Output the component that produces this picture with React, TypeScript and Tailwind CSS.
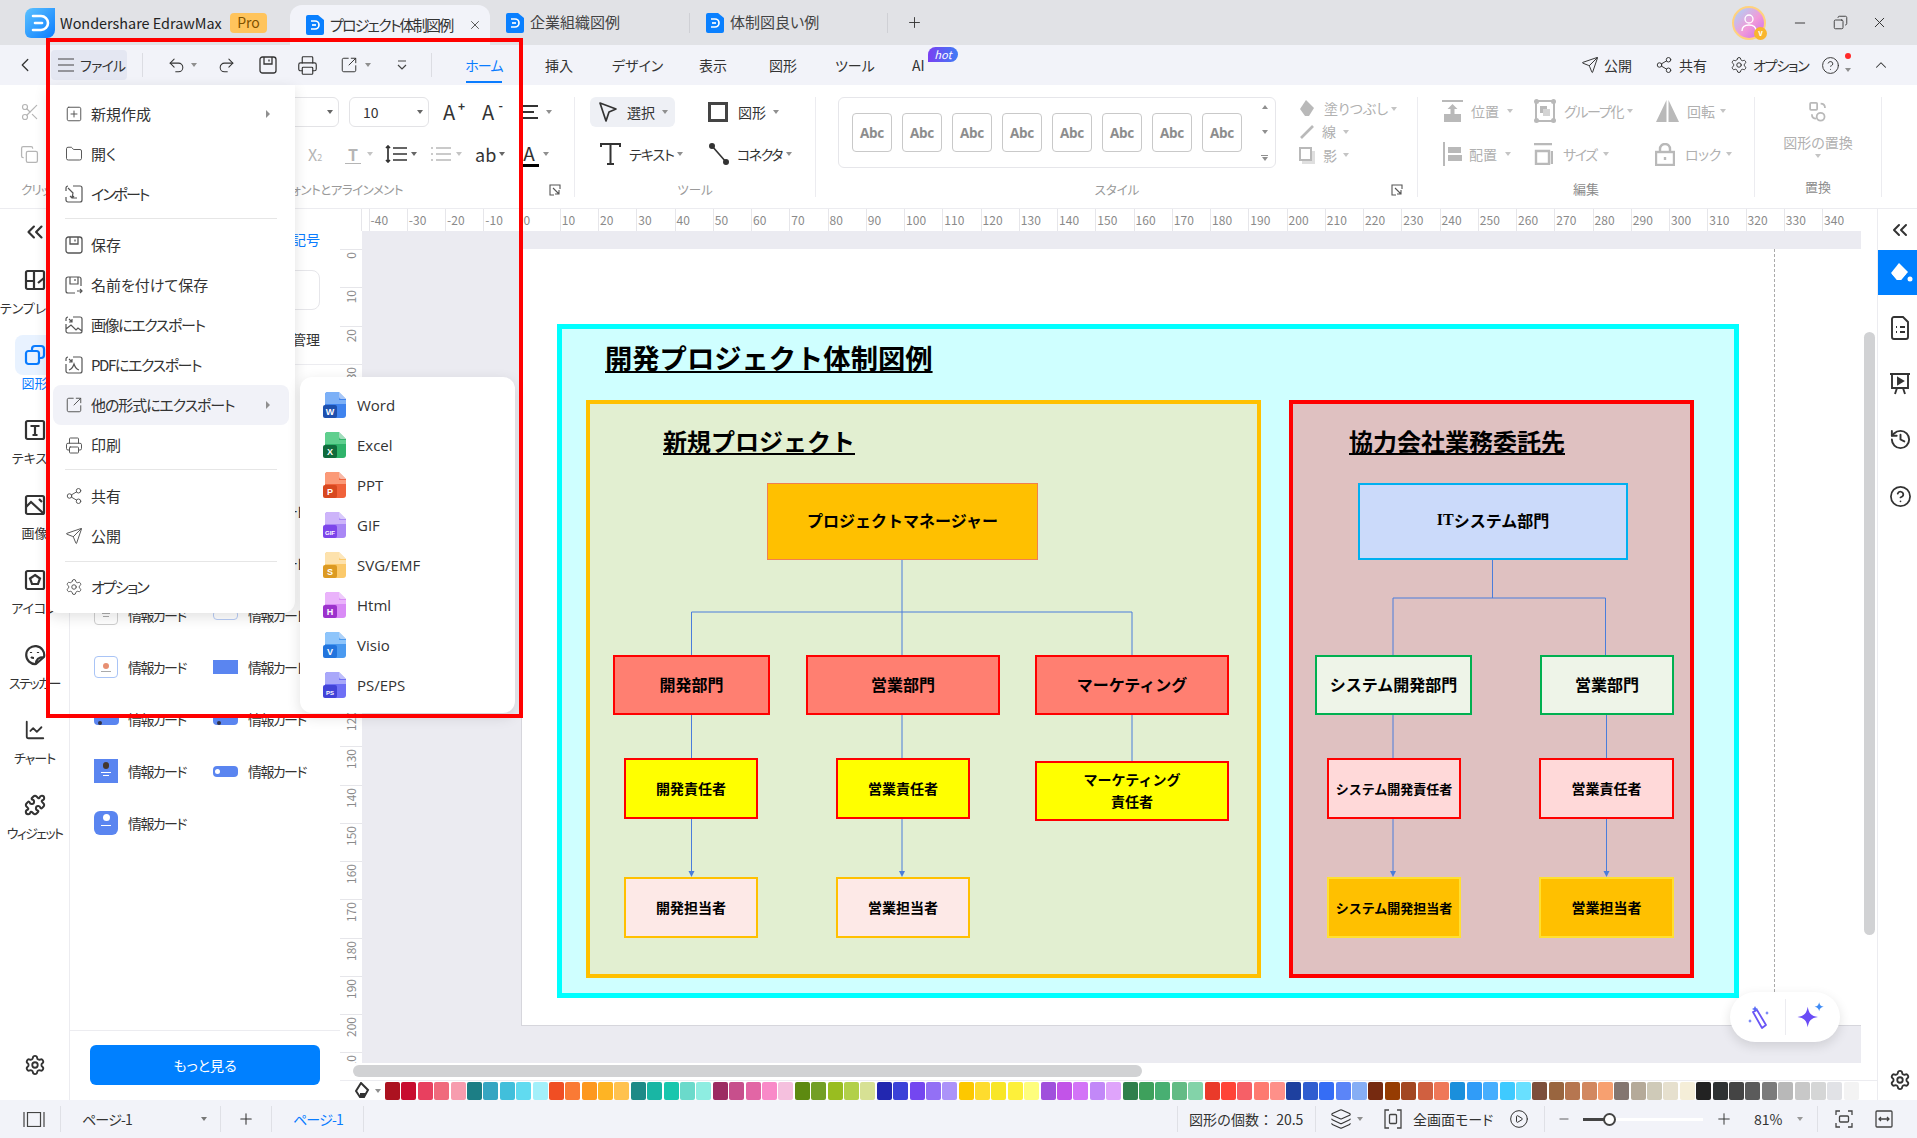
import {
  ChartLine, ChevronLeft, ChevronsLeft, ChevronUp, CircleHelp, CirclePlay, Copy, Folder, History, Layers, Minus, Plus,
  Printer, Puzzle, Redo2, Scissors, Send, Settings, Share2, SquareArrowOutUpRight, SquarePlus, Undo2, X,
} from "lucide-react";
import { ReactNode } from "react";

const palette = [
  "#ac1220", "#c80c2f", "#e8405f", "#f06a7c", "#f79cae",
  "#1c7e85", "#36a6c2", "#41bfdb", "#61dbf0", "#a3f0fa",
  "#f04e23", "#fa7a35", "#fd981e", "#feb424", "#ffc24f",
  "#1d8a87", "#19b6a4", "#18c6ad", "#6bdacb", "#8eede1",
  "#9c2c62", "#c74f8c", "#e266a5", "#f98ac8", "#f5c0de",
  "#5d8a10", "#739f26", "#99bd20", "#b2d04a", "#d7e194",
  "#2227b0", "#3b42d8", "#7447f0", "#9370f5", "#ac93f9",
  "#fdc800", "#fedc2e", "#f8e627", "#fdf03a", "#fefd7c",
  "#a050dc", "#c254e8", "#d374f7", "#c288f8", "#dfa4fb",
  "#2f7f4c", "#3ea05c", "#48af72", "#63bb85", "#83d3a9",
  "#ea3a2a", "#ff4438", "#f66067", "#fe7a70", "#fe9089",
  "#1e409f", "#2f5dd0", "#356df5", "#5b85f8", "#86aef5",
  "#762a10", "#963c02", "#a34722", "#d06040", "#ef7858",
  "#1a8fdc", "#309cf8", "#46aefe", "#3fcaff", "#69e0ff",
  "#7d4f3c", "#99653f", "#b67650", "#d28860", "#f7a070",
  "#847670", "#b5aa99", "#cfcab8", "#e6e0ce", "#f5eed8",
  "#222222", "#2e3233", "#444444", "#5b5b5b", "#7c7c7c",
  "#b8b8b8", "#c8c8c8", "#d5d6d6", "#e1e2e6", "#f3f3f3", "#ffffff",
];

function Caret({ className = "" }: { className?: string }) {
  return <span className={`inline-block shrink-0 border-x-[3.5px] border-t-[4px] border-x-transparent border-t-[#8f8f8f] ${className}`} />;
}

function SideCaret() {
  return <span className="inline-block border-y-[4px] border-l-[4px] border-y-transparent border-l-[#8f8f8f]" />;
}

function Logo() {
  return (
    <svg width="30" height="30" viewBox="0 0 30 30" className="shrink-0">
      <defs>
        <linearGradient id="lg" x1="0" y1="0" x2="1" y2="1">
          <stop offset="0" stopColor="#5cc2ff" />
          <stop offset="1" stopColor="#0a7cff" />
        </linearGradient>
      </defs>
      <path d="M8 0h22v22a8 8 0 0 1-8 8H6a6 6 0 0 1-6-6V8a8 8 0 0 1 8-8z" fill="url(#lg)" />
      <path d="M8 8h8a7 7 0 0 1 0 14H8" fill="none" stroke="#fff" strokeWidth="2.6" strokeLinecap="round" />
      <path d="M10 15h7" stroke="#fff" strokeWidth="2.6" strokeLinecap="round" />
    </svg>
  );
}

function DocMark() {
  return (
    <svg width="18" height="20" viewBox="0 0 18 20" className="shrink-0">
      <path d="M2 0h10l6 5v13a2 2 0 0 1-2 2H2a2 2 0 0 1-2-2V2a2 2 0 0 1 2-2z" fill="#0a80ff" />
      <path d="M5 6h4a4 4 0 0 1 0 8H5" fill="none" stroke="#fff" strokeWidth="1.7" />
      <path d="M6 10h4" stroke="#fff" strokeWidth="1.7" />
    </svg>
  );
}

function SaveIcon({ size = 18, color = "#333" }: { size?: number; color?: string }) {
  return (
    <svg width={size} height={size} viewBox="0 0 18 18" fill="none" stroke={color} strokeWidth="1.3" className="shrink-0">
      <rect x="1" y="1" width="16" height="16" rx="2.5" />
      <path d="M5 1v7h8V1M10 3.5v2" />
    </svg>
  );
}

function MenuGlyph({ kind }: { kind: string }) {
  return (
    <svg width="18" height="18" viewBox="0 0 18 18" fill="none" stroke="#555" strokeWidth="1.2" className="shrink-0">
      {kind === "import" && <path d="M8 1h7a2 2 0 0 1 2 2v12a2 2 0 0 1-2 2H3a2 2 0 0 1-2-2v-3M1 6V3a2 2 0 0 1 2-2M3 3l5 5-1 5h5M5 11l2 2 2-2" />}
      {kind === "saveas" && <path d="M16 10V3a2 2 0 0 0-2-2H3a2 2 0 0 0-2 2v12a2 2 0 0 0 2 2h7M5 1v7h8V1M10 3v2M12 15h5M15 13l2 2-2 2" />}
      {kind === "image" && <path d="M8 1h7a2 2 0 0 1 2 2v12a2 2 0 0 1-2 2H3a2 2 0 0 1-2-2V8M1 5V3a2 2 0 0 1 2-2M1 13l5-4 5 5 2-2 4 3M4 3l3 3M7 3v3H4" />}
      {kind === "pdf" && <path d="M8 1h7a2 2 0 0 1 2 2v12a2 2 0 0 1-2 2H3a2 2 0 0 1-2-2V8M1 5V3a2 2 0 0 1 2-2M4 3l3 3M7 3v3H4M4 14c3-1 4-3 5-6 1 3 2 5 5 6" />}
    </svg>
  );
}

function MenuItem({ icon, label, arrow, active, track = "" }: { icon: ReactNode; label: string; arrow?: boolean; active?: boolean; track?: string }) {
  return (
    <div className={`mx-[6px] flex h-[40px] items-center rounded-lg pl-[12px] pr-[19px] ${active ? "bg-[#f1f2f8]" : ""}`}>
      <span className="flex w-[18px] justify-center text-[#555]">{icon}</span>
      <span className={`ml-[8px] flex-1 whitespace-nowrap text-[15px] text-[#333] ${track}`}>{label}</span>
      {arrow && <SideCaret />}
    </div>
  );
}

function FileBadge({ light, mid, dark, letter }: { light: string; mid: string; dark: string; letter: string }) {
  return (
    <svg width="23" height="27" viewBox="0 0 23 27" className="shrink-0">
      <path d="M5 0h11l7 7v16a3 3 0 0 1-3 3H5a3 3 0 0 1-3-3V3a3 3 0 0 1 3-3z" fill={mid} />
      <path d="M5 0h11v8h7v4H2V3a3 3 0 0 1 3-3z" fill={light} />
      <path d="M16 0l7 7h-5a2 2 0 0 1-2-2z" fill="#fff" fillOpacity="0.55" />
      <rect x="0" y="13" width="14" height="13" rx="2" fill={dark} />
      <text x="7" y="23" textAnchor="middle" fontSize={letter.length > 1 ? 6 : 9} fontWeight="700" fill="#fff" fontFamily="'Liberation Sans', sans-serif">{letter}</text>
    </svg>
  );
}

function FileMenu() {
  return (
    <div className="absolute left-[47px] top-[85px] w-[248px] rounded-b-xl bg-white pb-[6px] pt-[9px] shadow-[0_4px_14px_rgba(0,0,0,0.12)]">
      <MenuItem icon={<SquarePlus size={18} strokeWidth={1.3} />} label="新規作成" arrow />
      <MenuItem icon={<Folder size={18} strokeWidth={1.3} />} label="開く" />
      <MenuItem icon={<MenuGlyph kind="import" />} label="インポート" track="tracking-[-2px]" />
      <div className="mx-[18px] mb-[6px] mt-[4px] h-px bg-[#e6e6e6]" />
      <MenuItem icon={<SaveIcon color="#555" />} label="保存" />
      <MenuItem icon={<MenuGlyph kind="saveas" />} label="名前を付けて保存" />
      <MenuItem icon={<MenuGlyph kind="image" />} label="画像にエクスポート" track="tracking-[-1.4px]" />
      <MenuItem icon={<MenuGlyph kind="pdf" />} label="PDFにエクスポート" track="tracking-[-1.4px]" />
      <MenuItem icon={<SquareArrowOutUpRight size={18} strokeWidth={1.3} />} label="他の形式にエクスポート" arrow active track="tracking-[-1.1px]" />
      <MenuItem icon={<Printer size={19} strokeWidth={1.3} />} label="印刷" />
      <div className="mx-[18px] mb-[6px] mt-[4px] h-px bg-[#e6e6e6]" />
      <MenuItem icon={<Share2 size={18} strokeWidth={1.3} />} label="共有" />
      <MenuItem icon={<Send size={18} strokeWidth={1.3} />} label="公開" />
      <div className="mx-[18px] mb-[5px] mt-[5px] h-px bg-[#e6e6e6]" />
      <MenuItem icon={<Settings size={18} strokeWidth={1.3} />} label="オプション" track="tracking-[-1.8px]" />
    </div>
  );
}

function ExportMenu() {
  const rows: [string, string, string, string, string][] = [
    ["Word", "#7cb0f7", "#3f83ee", "#1d50ae", "W"],
    ["Excel", "#5fcf8e", "#2fb36a", "#106b3c", "X"],
    ["PPT", "#fb9a78", "#f0623a", "#d8481f", "P"],
    ["GIF", "#cdb4fa", "#a987f5", "#7c45ea", "GIF"],
    ["SVG/EMF", "#fde2ad", "#fbc96a", "#dc9a22", "S"],
    ["Html", "#eab3fb", "#d98bf6", "#9c32cc", "H"],
    ["Visio", "#8ec5fb", "#4a9af0", "#2274dd", "V"],
    ["PS/EPS", "#a9a8fa", "#6f70f5", "#4243d8", "PS"],
  ];
  return (
    <div className="absolute left-[300px] top-[377px] w-[215px] rounded-xl bg-white py-[8px] shadow-[0_4px_14px_rgba(0,0,0,0.12)]">
      {rows.map(([name, light, mid, dark, letter]) => (
        <div key={name} className="flex h-[40px] items-center pl-[23px]">
          <FileBadge light={light} mid={mid} dark={dark} letter={letter} />
          <span className="ml-[11px] font-['Open_Sans','Noto_Sans',sans-serif] text-[15px] text-[#333]">{name}</span>
        </div>
      ))}
    </div>
  );
}

function TitleBar() {
  return (
    <div className="flex h-[45px] shrink-0 items-center bg-[#e1e2e6] text-[15px] text-[#444]">
      <div className="ml-[25px]"><Logo /></div>
      <span className="ml-[5px] w-[160px] whitespace-nowrap text-[14.4px] text-[#222]">Wondershare EdrawMax</span>
      <span className="ml-[10px] flex h-[20px] w-[37px] items-center justify-center rounded bg-[#ffc45c] text-[14px] text-[#7f5200]">Pro</span>
      <div className="ml-[23px] flex h-[40px] w-[200px] items-center self-end rounded-t-xl bg-[#f2f3f9] pl-[16px]">
        <DocMark />
        <span className="ml-[6px] w-[122px] whitespace-nowrap tracking-[-1.8px] text-[#333]">プロジェクト体制図例</span>
        <X size={14} strokeWidth={1.5} className="ml-[16px] text-[#444]" />
      </div>
      <div className="ml-[16px]"><DocMark /></div>
      <span className="ml-[6px] w-[90px] whitespace-nowrap">企業組織図例</span>
      <span className="ml-[69px] h-[20px] w-px bg-[#cfd0d5]" />
      <div className="ml-[16px]"><DocMark /></div>
      <span className="ml-[6px] w-[90px] whitespace-nowrap">体制図良い例</span>
      <span className="ml-[67px] h-[20px] w-px bg-[#cfd0d5]" />
      <Plus size={17} strokeWidth={1.3} className="ml-[18px] text-[#333]" />
      <div className="relative ml-auto h-[34px] w-[34px] rounded-full border-2 border-[#ffd27d] bg-[linear-gradient(135deg,#a8d8f8,#f19ad8_55%,#c86cf0)]">
        <svg width="30" height="30" viewBox="0 0 30 30" fill="none" stroke="#fff" strokeWidth="1.3">
          <circle cx="15" cy="11" r="4" />
          <path d="M8 23c0-4 3-6 7-6s7 2 7 6" />
        </svg>
        <span className="absolute -bottom-[2px] -right-[3px] flex h-[13px] w-[13px] items-center justify-center rounded-full bg-[#f9b52e] text-[8px] font-bold leading-none text-white">v</span>
      </div>
      <Minus size={16} strokeWidth={1.4} className="ml-[26px] text-[#333]" />
      <Copy size={15} strokeWidth={1.4} className="ml-[25px] scale-x-[-1] text-[#333]" />
      <X size={17} strokeWidth={1.4} className="ml-[23px] text-[#333]" />
      <span className="w-[29px]" />
    </div>
  );
}

function MenuBar() {
  return (
    <div className="flex h-[40px] shrink-0 items-center bg-[#f2f3f9] text-[14px] text-[#333]">
      <ChevronLeft size={22} strokeWidth={1.4} className="ml-[14px] w-[22px] text-[#333]" />
      <div className="ml-[15px] flex h-[30px] w-[76px] items-center rounded bg-[#e4e7f2] pl-[7px]">
        <svg width="16" height="14" viewBox="0 0 16 14" stroke="#444" strokeWidth="1.2"><path d="M0 1h16M0 7h16M0 13h16" /></svg>
        <span className="ml-[6px] whitespace-nowrap tracking-[-0.8px]">ファイル</span>
      </div>
      <span className="ml-[15px] h-[24px] w-px bg-[#dcdde3]" />
      <Undo2 size={19} strokeWidth={1.3} className="ml-[24px]" />
      <Caret className="ml-[5px]" />
      <Redo2 size={19} strokeWidth={1.3} className="ml-[20px]" />
      <div className="ml-[23px]"><SaveIcon /></div>
      <Printer size={21} strokeWidth={1.3} className="ml-[20px]" />
      <SquareArrowOutUpRight size={18} strokeWidth={1.3} className="ml-[22px]" />
      <Caret className="ml-[7px]" />
      <svg width="12" height="12" viewBox="0 0 12 12" fill="none" stroke="#444" strokeWidth="1.2" className="ml-[25px]"><path d="M2 2h8M2 6l4 4 4-4" /></svg>
      <span className="ml-[23px] h-[24px] w-px bg-[#dcdde3]" />
      <span className="relative ml-[34px] flex h-[40px] w-[36px] items-center justify-center whitespace-nowrap tracking-[-0.8px] text-[#0a7cff]">
        ホーム
        <span className="absolute bottom-[2px] left-0 h-[2px] w-full bg-[#0a7cff]" />
      </span>
      <span className="ml-[43px] w-[28px] whitespace-nowrap">挿入</span>
      <span className="ml-[39px] w-[44px] whitespace-nowrap">デザイン</span>
      <span className="ml-[43px] w-[28px] whitespace-nowrap">表示</span>
      <span className="ml-[42px] w-[28px] whitespace-nowrap">図形</span>
      <span className="ml-[38px] w-[33px] whitespace-nowrap">ツール</span>
      <span className="relative ml-[44px] w-[14px]">
        AI
        <span className="absolute -top-[8px] left-[16px] flex h-[15px] w-[30px] items-center justify-center rounded-t-full rounded-br-full bg-[linear-gradient(90deg,#7a3ff2,#3f7cf5)] text-[11px] italic leading-none text-white">hot</span>
      </span>
      <Send size={18} strokeWidth={1.3} className="ml-auto" />
      <span className="ml-[5px] w-[28px] whitespace-nowrap">公開</span>
      <Share2 size={18} strokeWidth={1.3} className="ml-[23px]" />
      <span className="ml-[6px] w-[28px] whitespace-nowrap">共有</span>
      <Settings size={18} strokeWidth={1.3} className="ml-[23px]" />
      <span className="ml-[5px] w-[53px] whitespace-nowrap tracking-[-1.2px]">オプション</span>
      <CircleHelp size={19} strokeWidth={1.2} className="ml-[15px]" />
      <span className="relative ml-[5px] h-[14px] w-[7px]">
        <span className="absolute -top-[5px] left-0 h-[6px] w-[6px] rounded-full bg-[#ff2a2a]" />
        <Caret className="absolute bottom-0 left-0" />
      </span>
      <ChevronUp size={18} strokeWidth={1.4} className="ml-[20px]" />
      <span className="w-[27px]" />
    </div>
  );
}

function Expander() {
  return (
    <svg width="12" height="12" viewBox="0 0 12 12" fill="none" stroke="#555" strokeWidth="1.1" className="shrink-0">
      <path d="M5 11H1V1h10v4M4 4l6 6M10 6v4H6" />
    </svg>
  );
}

function Dim({ className = "", children }: { className?: string; children: ReactNode }) {
  return <span className={`whitespace-nowrap text-[14px] text-[#b0b0b0] ${className}`}>{children}</span>;
}

function Ribbon() {
  const g = "#b9b9b9";
  return (
    <div className="flex h-[124px] shrink-0 items-start border-b border-[#ececf0] bg-white pt-[12px]">
      <section className="h-[100px] w-[575px] shrink-0 border-r border-[#ececf0]">
        <div className="flex h-[30px] items-center">
          <Scissors size={20} strokeWidth={1.4} className="ml-[20px] text-[#b5b5b5]" />
          <div className="ml-[160px] flex h-[30px] w-[139px] items-center justify-end rounded-md border border-[#e3e3e6] pr-[5px]"><Caret className="border-t-[#666]" /></div>
          <div className="ml-[10px] flex h-[30px] w-[80px] items-center justify-between rounded-md border border-[#e3e3e6] pl-[13px] pr-[5px] text-[14px] text-[#333]">10<Caret className="border-t-[#666]" /></div>
          <span className="relative ml-[14px] w-[20px] text-[20px] leading-none text-[#333]">A<span className="absolute -right-[2px] -top-[2px] text-[12px] font-bold">+</span></span>
          <span className="relative ml-[19px] w-[20px] text-[20px] leading-none text-[#333]">A<span className="absolute -right-[1px] -top-[3px] text-[12px] font-bold">-</span></span>
          <svg width="18" height="14" viewBox="0 0 18 14" stroke="#333" strokeWidth="1.8" className="ml-[20px]"><path d="M0 1h16M0 7h12M0 13h16" /></svg>
          <Caret className="ml-[6px]" />
        </div>
        <div className="mt-[12px] flex h-[30px] items-center">
          <Copy size={19} strokeWidth={1.6} className="ml-[20px] text-[#b5b5b5]" />
          <span className="ml-[269px] w-[20px] whitespace-nowrap text-[16px] text-[#b5b5b5]">X<span className="text-[9px]">2</span></span>
          <span className="ml-[17px] w-[16px] border-b border-[#b5b5b5] text-center text-[16px] font-bold leading-[18px] text-[#b5b5b5]">T</span>
          <Caret className="ml-[6px] border-t-[#c4c4c4]" />
          <svg width="22" height="18" viewBox="0 0 22 18" fill="none" stroke="#333" strokeWidth="1.7" className="ml-[12px]"><path d="M8 3h14M8 9h14M8 15h14M3 1v16M1 3l2-2 2 2M1 15l2 2 2-2" /></svg>
          <Caret className="ml-[4px] border-t-[#666]" />
          <svg width="20" height="16" viewBox="0 0 20 16" fill="none" stroke="#b9b9b9" strokeWidth="1.7" className="ml-[14px]"><path d="M5 2h15M5 8h15M5 14h15M0 2h2M0 8h2M0 14h2" /></svg>
          <Caret className="ml-[5px] border-t-[#c4c4c4]" />
          <span className="ml-[13px] w-[21px] text-[18px] leading-none text-[#333]">ab</span>
          <Caret className="ml-[3px] border-t-[#666]" />
          <span className="ml-[14px] w-[20px] border-b-[3px] border-black text-center text-[19px] leading-[22px] text-[#333]">A</span>
          <Caret className="ml-[4px]" />
        </div>
        <div className="mt-[11px] flex h-[20px] items-center text-[12.5px] text-[#9a9a9a]">
          <span className="ml-[21px] w-[60px] whitespace-nowrap tracking-[-0.8px]">クリップボード</span>
          <span className="w-[322px] whitespace-nowrap text-right tracking-[-0.5px]">フォントとアラインメント</span>
          <span className="ml-[146px]"><Expander /></span>
        </div>
      </section>

      <section className="h-[100px] w-[241px] shrink-0 border-r border-[#ececf0] text-[14px] text-[#333]">
        <div className="flex h-[30px] items-center">
          <div className="ml-[15px] flex h-[30px] w-[85px] items-center rounded-md bg-[#eef0f5] pl-[8px]">
            <svg width="20" height="22" viewBox="0 0 20 22" fill="none" stroke="#333" strokeWidth="1.7" strokeLinejoin="round"><path d="M2 2l16 6-7 3-3 9z" /></svg>
            <span className="ml-[9px] w-[32px] whitespace-nowrap">選択</span>
            <Caret className="ml-[3px]" />
          </div>
          <span className="ml-[33px] h-[20px] w-[20px] border-[3px] border-[#444]" />
          <span className="ml-[10px] w-[28px] whitespace-nowrap">図形</span>
          <Caret className="ml-[7px]" />
        </div>
        <div className="mt-[12px] flex h-[30px] items-center">
          <svg width="21" height="22" viewBox="0 0 21 22" fill="none" stroke="#333" strokeWidth="2" className="ml-[25px]"><path d="M1 4V1h19v3M10.5 1v20M7 21h7" /></svg>
          <span className="ml-[8px] w-[43px] whitespace-nowrap tracking-[-1px]">テキスト</span>
          <Caret className="ml-[5px]" />
          <svg width="20" height="22" viewBox="0 0 20 22" stroke="#333" strokeWidth="1.6" fill="#333" className="ml-[26px]"><path d="M3 3l14 16" /><circle cx="3" cy="3" r="2.2" /><circle cx="17" cy="19" r="2.2" /></svg>
          <span className="ml-[8px] w-[44px] whitespace-nowrap tracking-[-1.5px]">コネクタ</span>
          <Caret className="ml-[5px]" />
        </div>
        <div className="mt-[11px] h-[20px] text-center text-[12.5px] leading-[20px] text-[#9a9a9a]">ツール</div>
      </section>

      <section className="h-[100px] w-[602px] shrink-0 border-r border-[#ececf0]">
        <div className="flex h-[71px]">
          <div className="ml-[22px] flex h-[71px] w-[438px] items-center rounded-md border border-[#e6e6ea] pl-[13px]">
            <div className="flex gap-[10px]">
              {[0, 1, 2, 3, 4, 5, 6, 7].map((i) => (
                <span key={i} className="flex h-[39px] w-[40px] items-center justify-center rounded border border-[#c9c9c9] pt-[2px] font-['Open_Sans',sans-serif] text-[13.5px] font-bold tracking-[-0.3px] text-[#8d8d8d]">Abc</span>
              ))}
            </div>
            <div className="ml-[19px] flex h-[56px] flex-col items-center justify-between">
              <Caret className="rotate-180" />
              <Caret />
              <span className="flex flex-col items-center gap-[1px]"><span className="h-px w-[7px] bg-[#8f8f8f]" /><Caret /></span>
            </div>
          </div>
          <div className="ml-[23px] flex flex-col">
            <div className="flex h-[23px] items-center">
              <svg width="18" height="18" viewBox="0 0 18 18" fill={g} className="shrink-0"><path d="M7 0l8 8-5 8H6L1 9z" /></svg>
              <Dim className="ml-[7px] w-[59px]">塗りつぶし</Dim>
              <Caret className="ml-[8px] border-t-[#c4c4c4]" />
            </div>
            <div className="flex h-[23px] items-center">
              <svg width="16" height="16" viewBox="0 0 16 16" stroke={g} strokeWidth="2.6" className="shrink-0"><path d="M2 14L14 2" /></svg>
              <Dim className="ml-[7px] w-[15px]">線</Dim>
              <Caret className="ml-[6px] border-t-[#c4c4c4]" />
            </div>
            <div className="flex h-[24px] items-center">
              <svg width="16" height="17" viewBox="0 0 16 17" fill="none" className="shrink-0"><rect x="3" y="4" width="13" height="13" fill="#dfdfdf" /><rect x="1" y="1" width="11" height="12" stroke={g} strokeWidth="2" fill="#fff" /></svg>
              <Dim className="ml-[8px] w-[14px]">影</Dim>
              <Caret className="ml-[6px] border-t-[#c4c4c4]" />
            </div>
          </div>
        </div>
        <div className="mt-[12px] flex h-[20px] items-center text-[12.5px] text-[#9a9a9a]">
          <span className="w-[602px] text-center">スタイル</span>
          <span className="-ml-[27px]"><Expander /></span>
        </div>
      </section>

      <section className="h-[100px] w-[337px] shrink-0 border-r border-[#ececf0]">
        <div className="-mt-[1px] flex h-[30px] items-center">
          <svg width="21" height="22" viewBox="0 0 21 22" fill={g} className="ml-[24px] shrink-0"><path d="M0 0h21v2H0zM2 14h17v8H2zM10.5 4l5 5h-3v5h-4V9h-3z" /></svg>
          <Dim className="ml-[8px] w-[30px]">位置</Dim>
          <Caret className="ml-[6px] border-t-[#c4c4c4]" />
          <svg width="22" height="24" viewBox="0 0 22 24" fill="none" className="ml-[21px] shrink-0"><rect x="2" y="2" width="18" height="20" rx="2" stroke={g} strokeWidth="2" /><rect x="6" y="7" width="7" height="7" fill={g} /><rect x="9" y="10" width="7" height="7" fill="#d4d4d4" /><circle cx="2.5" cy="2.5" r="2.5" fill={g} /><circle cx="19.5" cy="2.5" r="2.5" fill={g} /><circle cx="2.5" cy="21.5" r="2.5" fill={g} /><circle cx="19.5" cy="21.5" r="2.5" fill={g} /></svg>
          <Dim className="ml-[8px] w-[58px] tracking-[-1.3px]">グループ化</Dim>
          <Caret className="ml-[5px] border-t-[#c4c4c4]" />
          <svg width="23" height="22" viewBox="0 0 23 22" fill={g} className="ml-[23px] shrink-0"><path d="M10.5 0v22H0zM12.500 0L23 22H12.500z" /></svg>
          <Dim className="ml-[8px] w-[29px]">回転</Dim>
          <Caret className="ml-[4px] border-t-[#c4c4c4]" />
        </div>
        <div className="mt-[13px] flex h-[30px] items-center">
          <svg width="19" height="24" viewBox="0 0 19 24" fill={g} className="ml-[25px] shrink-0"><path d="M0 0h2v24H0zM5 5h13v6H5zM5 13h17v6H5z" /></svg>
          <Dim className="ml-[7px] w-[30px]">配置</Dim>
          <Caret className="ml-[6px] border-t-[#c4c4c4]" />
          <svg width="20" height="22" viewBox="0 0 20 22" fill="none" stroke={g} strokeWidth="2.4" className="ml-[22px] shrink-0"><path d="M1 1h18M3 8h13v13H3zM19 8v13" /></svg>
          <Dim className="ml-[10px] w-[32px] tracking-[-1.5px]">サイズ</Dim>
          <Caret className="ml-[8px] border-t-[#c4c4c4]" />
          <svg width="20" height="23" viewBox="0 0 20 23" fill="none" stroke={g} strokeWidth="2.4" className="ml-[46px] shrink-0"><rect x="1" y="9" width="18" height="13" /><path d="M5 9V6a5 5 0 0 1 10 0v3M10 14v3" /></svg>
          <Dim className="ml-[10px] w-[32px] tracking-[-0.5px]">ロック</Dim>
          <Caret className="ml-[9px] border-t-[#c4c4c4]" />
        </div>
        <div className="mt-[10px] h-[20px] text-center text-[13px] leading-[20px] text-[#8c8c8c]">編集</div>
      </section>

      <section className="flex h-[100px] w-[127px] shrink-0 flex-col items-center border-r border-[#ececf0]">
        <svg width="20" height="24" viewBox="0 0 20 24" fill="none" stroke={g} strokeWidth="2" className="mt-[4px]"><rect x="1" y="2" width="8" height="8" rx="1" /><circle cx="13" cy="18" r="4.5" /><path d="M13 3c3 0 5 2 5 5M3 15c0 3 2 5 5 5" /></svg>
        <Dim className="mt-[10px] leading-[20px]">図形の置換</Dim>
        <Caret className="mt-[2px] border-t-[#c4c4c4]" />
        <span className="mt-[19px] text-[13px] leading-[20px] text-[#8c8c8c]">置換</span>
      </section>
    </div>
  );
}

function RailIcon({ kind }: { kind: string }) {
  const common = { width: 22, height: 22, viewBox: "0 0 22 22", fill: "none", stroke: "#333", strokeWidth: 2.2 };
  if (kind === "template") return <svg {...common}><rect x="2" y="2" width="18" height="18" rx="1.5" /><path d="M10 2v18M2 12h8M20 9l-6 5" /></svg>;
  if (kind === "shape") return <svg {...common} stroke="#0a7cff"><rect x="2" y="7" width="13" height="13" rx="2.5" /><path d="M8 7V5a3 3 0 0 1 3-3h6a3 3 0 0 1 3 3v6a3 3 0 0 1-3 3h-2" /></svg>;
  if (kind === "text") return <svg {...common}><rect x="2" y="2" width="18" height="18" rx="1.5" /><path d="M6.500 7h9M11 7v9M8.500 16h5" /></svg>;
  if (kind === "image") return <svg {...common}><rect x="2" y="2" width="18" height="18" rx="1.5" /><path d="M2 13l5-5 12 11M15 5l3 3" /></svg>;
  if (kind === "icon") return <svg {...common}><rect x="2" y="2" width="18" height="18" rx="1.5" /><path d="M11 6l5 3.5-2 5.5H8L6 9.500z" /></svg>;
  if (kind === "sticker") return <svg {...common}><path d="M20 13A9 9 0 1 0 12 20zM20 13c-5 0-8 2-8 7M7 8v1M14 8v1M7 13c1 1 2 1 3 1" /></svg>;
  if (kind === "chart") return <ChartLine size={22} strokeWidth={2} className="text-[#333]" />;
  return <Puzzle size={22} strokeWidth={2.2} className="text-[#333]" />;
}

function LeftRail() {
  const tools = [
    ["template", "テンプレート", ""],
    ["shape", "図形", ""],
    ["text", "テキスト", ""],
    ["image", "画像", ""],
    ["icon", "アイコン", ""],
    ["sticker", "ステッカー", "tracking-[-1.5px]"],
    ["chart", "チャート", "tracking-[-1px]"],
    ["widget", "ウィジェット", "tracking-[-1.6px]"],
  ];
  return (
    <aside className="flex h-full w-[70px] shrink-0 flex-col items-center border-r border-[#ececf0] bg-white">
      <div className="flex h-[46px] shrink-0 items-center"><ChevronsLeft size={26} strokeWidth={2} className="text-[#333]" /></div>
      {tools.map(([kind, label, track]) => (
        <div key={kind} className="flex h-[75px] w-[70px] shrink-0 flex-col items-center">
          <div className={`mt-[5px] flex h-[40px] w-[40px] items-center justify-center rounded-lg ${kind === "shape" ? "bg-[#e8f2ff]" : ""}`}>
            <RailIcon kind={kind} />
          </div>
          <span className={`mt-[-1px] whitespace-nowrap text-[13px] leading-[18px] ${track} ${kind === "shape" ? "text-[#0a7cff]" : "text-[#333]"}`}>{label}</span>
        </div>
      ))}
      <Settings size={22} strokeWidth={2} className="mb-[24px] mt-auto text-[#333]" />
    </aside>
  );
}

function Thumb({ kind }: { kind: string }) {
  if (kind === "id") return <span className="flex h-[20px] w-[24px] flex-col items-center justify-center gap-[2px] rounded-sm border border-[#cfcfcf] bg-white"><span className="h-px w-[8px] bg-[#aaa]" /><span className="h-px w-[6px] bg-[#aaa]" /></span>;
  if (kind === "idblue") return <span className="flex h-[22px] w-[24px] flex-col items-center justify-center gap-[2px] rounded-sm border border-[#a9c4f6] bg-white"><span className="h-[6px] w-[6px] rounded-full bg-[#e78f72]" /><span className="h-px w-[10px] bg-[#aaa]" /></span>;
  if (kind === "mini") return <span className="h-[10px] w-[25px] rounded-sm border border-[#b8ccf5] bg-white" />;
  if (kind === "rect") return <span className="h-[14px] w-[25px] bg-[#5a85f0]" />;
  if (kind === "bar") return <span className="flex h-[11px] w-[25px] items-end rounded-sm bg-[#5a85f0] pl-[4px]"><span className="h-[4px] w-[4px] rounded-full bg-[#334]" /></span>;
  if (kind === "tall") return <span className="flex h-[24px] w-[24px] flex-col items-center bg-[#5a85f0] pt-[3px]"><span className="h-[7px] w-[6px] rounded-sm bg-[#45372e]" /><span className="mt-[3px] h-px w-[10px] bg-white" /><span className="mt-[2px] h-px w-[6px] bg-white" /></span>;
  if (kind === "tag") return <span className="flex h-[11px] w-[25px] items-center rounded-sm bg-[#5a85f0] pl-[2px]"><span className="h-[5px] w-[5px] rounded-full bg-white" /></span>;
  return <span className="flex h-[24px] w-[24px] flex-col items-center rounded-md bg-[#5a85f0] pt-[3px]"><span className="h-[7px] w-[7px] rounded-full bg-white" /><span className="mt-[4px] h-px w-[10px] bg-white" /></span>;
}

function ShapePanel() {
  const rows = [
    ["id", "id"],
    ["id", "id"],
    ["id", "mini"],
    ["idblue", "rect"],
    ["bar", "bar"],
    ["tall", "tag"],
    ["round", ""],
  ];
  return (
    <aside className="flex h-full w-[270px] shrink-0 flex-col bg-white text-[14px] text-[#333]">
      <div className="flex h-[61px] shrink-0 items-center justify-end pr-[20px] text-[#0a7cff]">記号</div>
      <div className="ml-[20px] h-[40px] w-[230px] shrink-0 rounded-lg border border-[#e6e6ea]" />
      <div className="flex h-[55px] shrink-0 items-center justify-end border-b border-[#ececf0] pr-[20px] pt-[5px]">管理</div>
      <div className="mt-[120px] flex flex-col">
        {rows.map(([a, b], i) => (
          <div key={i} className="flex h-[52px] items-center">
            <span className="ml-[24px] flex w-[34px]"><Thumb kind={a} /></span>
            <span className="w-[85px] whitespace-nowrap tracking-[-1.6px]">情報カード</span>
            {b && <span className="flex w-[35px]"><Thumb kind={b} /></span>}
            {b && <span className="whitespace-nowrap tracking-[-1.6px]">情報カード</span>}
          </div>
        ))}
      </div>
      <div className="mt-auto flex h-[70px] shrink-0 items-start justify-center border-t border-[#ececf0] pt-[14px]">
        <button className="h-[40px] w-[230px] rounded-md bg-[#0080ff] text-[14px] text-white">もっと見る</button>
      </div>
    </aside>
  );
}

function HRuler() {
  const marks = Array.from({ length: 39 }, (_, i) => -40 + i * 10);
  return (
    <div className="flex h-[22px] shrink-0 overflow-hidden bg-white">
      <span className="h-full w-[22px] shrink-0 border-r border-[#e6e6ea]" />
      <span className="h-full w-[6.6px] shrink-0" />
      {marks.map((m) => (
        <span key={m} className="h-full w-[38.25px] shrink-0 border-l border-[#e6e6ea] pl-[1px] text-[12px] leading-[22px] text-[#8a8a8a]">{m}</span>
      ))}
    </div>
  );
}

function VRuler() {
  const marks = Array.from({ length: 22 }, (_, i) => i * 10);
  return (
    <div className="h-full w-[22px] shrink-0 overflow-hidden bg-white pt-[18px]">
      {marks.map((m) => (
        <div key={m} className="flex h-[38.25px] items-start justify-center border-t border-[#e6e6ea] pt-[2px]">
          <span className="rotate-180 text-[12px] leading-[22px] text-[#8a8a8a] [writing-mode:vertical-rl]">{m}</span>
        </div>
      ))}
    </div>
  );
}

function Connectors() {
  const lines = [
    "M380 311V406M169.5 363H610M169.5 363V406M610 363V406",
    "M169.5 466V509M380 466V509M610 466V512",
    "M169.5 570V622M380 570V622",
    "M970.5 311V349M871 349H1083.5M871 349V406M1083.5 349V406",
    "M871 466V509M1084.5 466V509",
    "M871 570V622M1084.5 570V622",
  ];
  return (
    <svg width="1339" height="777" className="absolute left-0 top-0" fill="none" stroke="#4a7ddb" strokeWidth="1">
      {lines.map((d) => <path key={d} d={d} />)}
      {[169.5, 380, 871, 1084.5].map((x) => (
        <path key={x} d={`M${x - 3} 622h6l-3 6z`} fill="#4a7ddb" stroke="none" />
      ))}
    </svg>
  );
}

function Diagram() {
  const box = "absolute flex items-center justify-center text-center font-bold text-black";
  return (
    <div className="absolute left-[159px] top-[18px] h-[777px] w-[1340px] border-b border-l border-[#d6d6dc] bg-white [font-feature-settings:normal]">
      <div className="absolute left-[1252px] top-0 h-[743px] border-l border-dashed border-[#aaaaaa]" />
      <div className="absolute left-[35px] top-[75px] h-[674px] w-[1182px] border-[5px] border-[#00ffff] bg-[#cfffff]" />
      <div className="absolute left-[64px] top-[151px] h-[578px] w-[675px] border-[4px] border-[#ffc000] bg-[#e2efd1]" />
      <div className="absolute left-[767px] top-[151px] h-[578px] w-[405px] border-[4px] border-[#ff0000] bg-[#dfc1c1]" />
      <div className="absolute left-[83px] top-[90px] whitespace-nowrap text-[27.3px] font-bold leading-[36px] text-black underline">開発プロジェクト体制図例</div>
      <div className="absolute left-[141px] top-[176px] whitespace-nowrap text-[24px] font-bold leading-[32px] text-black underline">新規プロジェクト</div>
      <div className="absolute left-[827px] top-[176px] whitespace-nowrap text-[24px] font-bold leading-[32px] text-black underline">協力会社業務委託先</div>
      <Connectors />

      <div className={`${box} left-[245px] top-[234px] h-[77px] w-[271px] border border-[#f08050] bg-[#ffc000] pb-[3px] text-[16px]`}>プロジェクトマネージャー</div>
      <div className={`${box} left-[91px] top-[406px] h-[60px] w-[157px] border-2 border-[#ff0000] bg-[#ff7f71] pb-[3px] text-[16px]`}>開発部門</div>
      <div className={`${box} left-[284px] top-[406px] h-[60px] w-[194px] border-2 border-[#ff0000] bg-[#ff7f71] pb-[3px] text-[16px]`}>営業部門</div>
      <div className={`${box} left-[513px] top-[406px] h-[60px] w-[194px] border-2 border-[#ff0000] bg-[#ff7f71] pb-[3px] text-[16px]`}>マーケティング</div>
      <div className={`${box} left-[102px] top-[509px] h-[61px] w-[134px] border-2 border-[#ff0000] bg-[#ffff00] text-[14px]`}>開発責任者</div>
      <div className={`${box} left-[314px] top-[509px] h-[61px] w-[134px] border-2 border-[#ff0000] bg-[#ffff00] text-[14px]`}>営業責任者</div>
      <div className={`${box} left-[513px] top-[512px] h-[60px] w-[194px] border-2 border-[#ff0000] bg-[#ffff00] pb-[2px] text-[14px] leading-[22px]`}>マーケティング<br />責任者</div>
      <div className={`${box} left-[102px] top-[628px] h-[61px] w-[134px] border-2 border-[#ffc000] bg-[#fde9e7] text-[14px]`}>開発担当者</div>
      <div className={`${box} left-[314px] top-[628px] h-[61px] w-[134px] border-2 border-[#ffc000] bg-[#fde9e7] text-[14px]`}>営業担当者</div>

      <div className={`${box} left-[836px] top-[234px] h-[77px] w-[270px] border-2 border-[#00b0f0] bg-[#cbdafa] pb-[3px] text-[16px]`}><span className="font-['Liberation_Serif',serif]">IT</span>システム部門</div>
      <div className={`${box} left-[793px] top-[406px] h-[60px] w-[157px] border-2 border-[#00b050] bg-[#eef4e8] pb-[3px] text-[16px]`}>システム開発部門</div>
      <div className={`${box} left-[1018px] top-[406px] h-[60px] w-[134px] border-2 border-[#00b050] bg-[#eef4e8] pb-[3px] text-[16px]`}>営業部門</div>
      <div className={`${box} left-[805px] top-[509px] h-[61px] w-[134px] border-2 border-[#ff0000] bg-[#ffd9d9] text-[13px]`}>システム開発責任者</div>
      <div className={`${box} left-[1017px] top-[509px] h-[61px] w-[135px] border-2 border-[#ff0000] bg-[#ffd9d9] text-[14px]`}>営業責任者</div>
      <div className={`${box} left-[805px] top-[628px] h-[61px] w-[134px] border-2 border-[#ffe030] bg-[#ffc000] text-[13px]`}>システム開発担当者</div>
      <div className={`${box} left-[1017px] top-[628px] h-[61px] w-[135px] border-2 border-[#ffe030] bg-[#ffc000] text-[14px]`}>営業担当者</div>

      <div className="absolute left-[1208px] top-[743px] flex h-[50px] w-[110px] items-center rounded-full bg-white shadow-[0_4px_12px_rgba(0,0,0,0.12)]">
        <svg width="24" height="28" viewBox="0 0 24 28" fill="none" className="ml-[17px]">
          <path d="M6 9l4-2 9 15-4 3z" stroke="#6a55f5" strokeWidth="1.8" strokeLinejoin="round" />
          <path d="M8 3l1 2 2 1-2 1-1 2-1-2-2-1 2-1zM20 8l.7 1.5L22 10l-1.3.5L20 12l-.7-1.500L18 10l1.300-.5zM3 16l.7 1.500L5 18l-1.300.5L3 20l-.7-1.500L1 18l1.300-.5z" fill="#5a6cf6" />
        </svg>
        <span className="ml-[14px] h-[36px] w-px bg-[#ececf0]" />
        <svg width="30" height="32" viewBox="0 0 26 28" className="ml-[9px]">
          <path d="M11 5c1 6 3 8 9 9-6 1-8 3-9 9-1-6-3-8-9-9 6-1 8-3 9-9z" fill="#6a4cf6" />
          <path d="M21 1c.4 2.5 1.500 3.600 4 4-2.500.4-3.600 1.500-4 4-.4-2.500-1.500-3.600-4-4 2.500-.4 3.600-1.500 4-4z" fill="#3f8cf6" />
        </svg>
      </div>
    </div>
  );
}

function Workspace() {
  return (
    <div className="flex h-full min-w-0 flex-1 flex-col">
      <HRuler />
      <div className="flex h-[832px] shrink-0">
        <VRuler />
        <div className="relative flex-1 overflow-hidden bg-[#ebebf1]"><Diagram /></div>
        <div className="w-[16px] shrink-0 bg-white pl-[3px] pt-[101px]">
          <div className="h-[603px] w-[11px] rounded-full bg-[#d1d2d4]" />
        </div>
      </div>
      <div className="h-[17px] shrink-0 bg-white pl-[13px] pt-[2px]">
        <div className="h-[12px] w-[789px] rounded-full bg-[#d1d2d4]" />
      </div>
      <div className="flex h-[20px] shrink-0 items-center border-t border-[#ececf0] bg-white">
        <svg width="19" height="18" viewBox="0 0 19 18" className="ml-[15px] shrink-0"><path d="M6 1l7 7-4 7H5L1 9z" fill="none" stroke="#333" strokeWidth="2" /><path d="M5 11h6l-2 5H5z" fill="#333" /></svg>
        <Caret className="ml-[1px]" />
        <div className="ml-[4px] flex">
          {palette.map((c, i) => (
            <span key={i} className="mr-[1.4px] h-[18px] w-[15px] shrink-0 rounded-[2px]" style={{ backgroundColor: c }} />
          ))}
        </div>
      </div>
    </div>
  );
}

function RightRail() {
  return (
    <aside className="flex h-full w-[40px] shrink-0 flex-col items-center border-l border-[#ececf0] bg-white pl-[5px] text-[#333]">
      <div className="flex h-[41px] shrink-0 items-center"><ChevronsLeft size={24} strokeWidth={2} /></div>
      <div className="-ml-[5px] flex h-[45px] w-[40px] shrink-0 items-center justify-center self-start bg-[#0080ff] pl-[5px]">
        <svg width="24" height="24" viewBox="0 0 24 24"><path d="M10 2l9 9-7 8H8l-6-7z" fill="#fff" /><path d="M3 13h14l-5 6H8z" fill="#fff" /><circle cx="21" cy="18" r="2.5" fill="#fff" /></svg>
      </div>
      <svg width="20" height="24" viewBox="0 0 20 24" fill="none" stroke="#333" strokeWidth="1.9" className="mt-[21px]"><path d="M2 3a2 2 0 0 1 2-2h9l5 5v15a2 2 0 0 1-2 2H4a2 2 0 0 1-2-2zM6 11h1M10 11h5M6 16h1M10 16h5" /></svg>
      <svg width="22" height="24" viewBox="0 0 22 24" fill="none" stroke="#333" strokeWidth="1.9" className="mt-[32px]"><path d="M1 2h20M3 2v14h16V2M6 22l2-6M16 22l-2-6" /><path d="M9 6l5 3-5 3z" fill="#333" /></svg>
      <History size={23} strokeWidth={2} className="mt-[32px]" />
      <CircleHelp size={23} strokeWidth={1.8} className="mt-[34px]" />
      <Settings size={22} strokeWidth={2} className="mb-[9px] mt-auto" />
    </aside>
  );
}

function StatusBar() {
  return (
    <div className="flex h-[38px] shrink-0 items-center bg-[#f2f3f9] text-[14px] text-[#333]">
      <svg width="22" height="15" viewBox="0 0 22 15" fill="none" stroke="#444" strokeWidth="1.2" className="ml-[23px]"><path d="M1 0v15M21 0v15" /><rect x="4.5" y=".5" width="13" height="14" /></svg>
      <span className="ml-[15px] h-[26px] w-px bg-[#dfe0e6]" />
      <span className="ml-[21px] w-[119px] whitespace-nowrap tracking-[-0.8px]">ページ-1</span>
      <Caret className="border-t-[#777]" />
      <span className="ml-[13px] h-[26px] w-px bg-[#dfe0e6]" />
      <Plus size={18} strokeWidth={1.4} className="ml-[16px]" />
      <span className="ml-[16px] h-[26px] w-px bg-[#dfe0e6]" />
      <span className="ml-[21px] w-[70px] whitespace-nowrap tracking-[-0.8px] text-[#0a7cff]">ページ-1</span>
      <span className="h-[26px] w-px bg-[#dfe0e6]" />
      <span className="ml-[813px] h-[26px] w-px bg-[#dfe0e6]" />
      <span className="ml-[11px] w-[116px] whitespace-nowrap [font-feature-settings:normal]">図形の個数： 20.5</span>
      <span className="ml-[10px] h-[26px] w-px bg-[#dfe0e6]" />
      <Layers size={22} strokeWidth={1.2} className="ml-[14px]" />
      <Caret className="ml-[5px]" />
      <svg width="18" height="20" viewBox="0 0 18 20" fill="none" stroke="#444" strokeWidth="1.3" className="ml-[21px]"><path d="M5 1H1v18h4M13 1h4v18h-4" /><rect x="5.5" y="5.5" width="7" height="9" rx="1" /></svg>
      <span className="ml-[11px] w-[90px] whitespace-nowrap">全画面モード</span>
      <CirclePlay size={20} strokeWidth={1.2} className="ml-[6px]" />
      <span className="ml-[15px] h-[26px] w-px bg-[#dfe0e6]" />
      <Minus size={14} strokeWidth={1.3} className="ml-[12px]" />
      <div className="relative ml-[12px] h-[3px] w-[120px] bg-white">
        <div className="h-full w-[26px] bg-[#444]" />
        <span className="absolute -top-[5px] left-[20px] h-[13px] w-[13px] rounded-full border-2 border-[#444] bg-white" />
      </div>
      <Plus size={18} strokeWidth={1.3} className="ml-[12px]" />
      <span className="ml-[21px] w-[32px] whitespace-nowrap">81%</span>
      <Caret className="ml-[11px] border-t-[#999]" />
      <span className="ml-[14px] h-[26px] w-px bg-[#dfe0e6]" />
      <svg width="18" height="18" viewBox="0 0 18 18" fill="none" stroke="#444" strokeWidth="1.3" className="ml-[17px]"><path d="M1 5V1h4M13 1h4v4M17 13v4h-4M5 17H1v-4" /><rect x="4.5" y="6" width="9" height="6" rx="1" /></svg>
      <svg width="18" height="18" viewBox="0 0 18 18" fill="none" stroke="#444" strokeWidth="1.3" className="ml-[22px]"><rect x="1" y="1" width="16" height="16" rx="1" /><path d="M4 9h10M6 7L4 9l2 2M12 7l2 2-2 2" /></svg>
    </div>
  );
}

export default function App() {
  return (
    <div className="relative flex h-[1138px] w-[1917px] flex-col overflow-hidden bg-white font-['Noto_Sans_CJK_JP','Noto_Sans',sans-serif] [font-feature-settings:'palt']">
      <TitleBar />
      <MenuBar />
      <Ribbon />
      <div className="flex h-[891px] shrink-0">
        <LeftRail />
        <ShapePanel />
        <Workspace />
        <RightRail />
      </div>
      <StatusBar />
      <FileMenu />
      <ExportMenu />
      <div className="pointer-events-none absolute left-[46px] top-[38px] h-[680px] w-[477px] border-[4px] border-[#ff0000]" />
    </div>
  );
}
